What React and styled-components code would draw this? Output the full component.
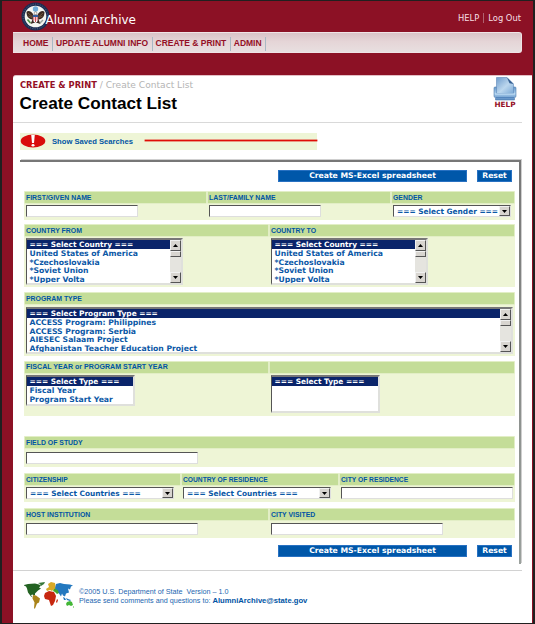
import React from "react";
import styled, { createGlobalStyle } from "styled-components";

const GlobalStyle = createGlobalStyle`
  * { box-sizing: border-box; }
  body { margin: 0; background: #1c1c1c; }
  ul { list-style: none; margin: 0; padding: 0; }
  h1, p { margin: 0; }
`;

const verdana = '"DejaVu Sans", sans-serif';
const arial = '"Liberation Sans", sans-serif';

const Page = styled.div`
  width: 535px;
  height: 624px;
  padding: 1px 2px 1px 2px;
  background: #202020;
  overflow: hidden;
  display: flex;
`;
const Shell = styled.div`
  flex: 1;
  display: flex;
  flex-direction: column;
  background: #8c1125;
  padding: 0 1px 0 11px;
  min-width: 0;
`;
const Masthead = styled.header`
  height: 31px;
  padding: 0 11px 0 8px;
  display: flex;
  align-items: center;
`;
const SealIcon = styled.svg`
  width: 29px;
  height: 29px;
  flex: none;
`;
const SiteName = styled.div`
  flex: 1;
  margin-left: -4.5px;
  padding-top: 7px;
  font: 12px/16px ${verdana};
  color: #fff;
  z-index: 1;
`;
const UserLinks = styled.nav`
  display: flex;
  gap: 4px;
  padding-top: 2px;
  font: 8.35px/10px ${verdana};
  color: #f6dfe3;
  a + a { border-left: 1px solid #b0616f; padding-left: 4px; }
`;
const MainNav = styled.nav`
  display: flex;
  width: 509px;
  height: 21px;
  padding: 5px 0 0 7px;
  border: 1px solid #efe3e5;
  border-left: 0;
  border-radius: 0 3px 3px 0;
  background: linear-gradient(#d9c3c7, #e5d5d7 45%, #e8dfe0);
`;
const NavItem = styled.a`
  height: 14px;
  margin-top: -1px;
  padding: 0 3.5px 0 3px;
  border-right: 1px solid #a9b9c4;
  font: bold 8.5px/13px ${arial};
  color: #941026;
  white-space: nowrap;
`;
const Panel = styled.main`
  flex: 1;
  margin-top: 22px;
  background: #fff;
  border-radius: 3px 0 0 0;
  border-top: 1px solid #e3bfc5;
  display: flex;
  flex-direction: column;
`;
const TitleBar = styled.div`
  width: 509px;
  height: 47px;
  padding: 3px 4px 0 7px;
  border-bottom: 1px solid #d9d9d9;
  display: flex;
  justify-content: space-between;
`;
const Crumbs = styled.div`
  font: 9.1px/12px ${verdana};
  color: #b4b4b4;
  white-space: pre;
  b { font-size: 8.35px; color: #941026; }
`;
const Title = styled.h1`
  font: bold 17.2px/20px ${arial};
  color: #000;
  margin-top: 2px;
  margin-left: -0.5px;
`;
const HelpLink = styled.a`
  width: 26px;
  display: flex;
  flex-direction: column;
  align-items: center;
  margin-top: -3px;
  font: bold 7.3px/8px ${verdana};
  color: #941026;
  svg { width: 24px; height: 25px; }
`;
const SavedSearches = styled.div`
  width: 297px;
  height: 17px;
  margin: 10px 0 10px 7px;
  background: #eef5d6;
  display: flex;
  align-items: center;
  font: bold 7.63px/12px ${arial};
  color: #0054a4;
  svg { width: 26px; height: 14px; margin-right: 6px; margin-top: -1px; }
  &::after { content: ""; width: 172px; height: 1px; margin: -2px 0 0 12px; background: #e00d06; box-shadow: 0 0 0 .4px #e00d06; }
`;
const SearchForm = styled.form`
  width: 501px;
  height: 404px;
  margin-left: 7px;
  padding: 8px 5px 0 4px;
  border: solid;
  border-width: 2px 2px 0 0;
  border-image: linear-gradient(#777, #9ba19d) 1;
  box-shadow: 1px -1px 0 #cfcfcf;
`;
const Actions = styled.div`
  display: flex;
  justify-content: flex-end;
  gap: 10px;
  margin-top: ${(p) => p.$gap || 0}px;
  padding-right: 2px;
  height: 12px;
`;
const ActionButton = styled.button`
  width: ${(p) => p.$width}px;
  height: 12px;
  padding: 0;
  border: 1px solid #2871c2;
  background: #0057a9;
  color: #fff;
  font: bold 7.68px/10px ${verdana};
`;
const Group = styled.section`
  display: grid;
  grid-template-columns: ${(p) => p.$columns || "1fr"};
  column-gap: 2px;
  width: 491px;
  height: ${(p) => p.$height}px;
  margin-top: ${(p) => p.$gap}px;
  padding: 1px 1px 0;
  background: #eef5d6;
`;
const Field = styled.div`
  display: flex;
  flex-direction: column;
  align-items: flex-start;
  min-width: 0;
`;
const Label = styled.label`
  width: 100%;
  height: 11px;
  padding-left: 1px;
  background: #c4dd98;
  box-shadow: 0 0 0 .5px #d6e8b6;
  font: bold ${(p) => p.$size || 6.9}px/11px ${arial};
  color: #0054a4;
  white-space: nowrap;
`;
const TextInput = styled.input`
  width: ${(p) => p.$width}px;
  height: 12px;
  margin: ${(p) => p.$top || 2}px 0 0 1px;
  padding: 0 2px;
  border: 1px solid;
  border-color: #555 #dedede #dedede #555;
  background: #fff;
  border-radius: 0;
`;
const Combo = styled.div`
  width: ${(p) => p.$width}px;
  height: 12px;
  margin: 2px 0 0 1px;
  padding-left: 3px;
  display: flex;
  justify-content: space-between;
  border: 1px solid;
  border-color: #555 #dedede #dedede #555;
  background: #fff;
  color: #0b58a6;
  font: bold 7.4px/11px ${verdana};
  white-space: nowrap;
`;
const ArrowButton = styled.span`
  width: 11px;
  height: ${(p) => p.$height || 10}px;
  flex: none;
  display: flex;
  align-items: center;
  justify-content: center;
  border: 1px solid;
  border-color: #f1f1f1 #555 #555 #f1f1f1;
  background: #d8d5d0;
  svg { width: 5px; height: 3px; fill: #000; transform: ${(p) => (p.$up ? "scaleY(-1)" : "none")}; }
`;
const ListFrame = styled.div`
  width: ${(p) => p.$width}px;
  height: ${(p) => p.$height}px;
  margin: ${(p) => p.$top || 2}px 0 0 1px;
  display: flex;
  border: 1px solid;
  border-color: #777 #dfe0dc #dfe0dc #555;
  border-width: 2px 2px 2px 1px;
  background: #fff;
  overflow: hidden;
`;
const Options = styled.ul`
  flex: 1;
  min-width: 0;
`;
const Option = styled.li`
  height: ${(p) => (p.$selected ? 9.2 : 8.63)}px;
  padding-left: 2.5px;
  background: ${(p) => (p.$selected ? "#0a246a" : "transparent")};
  color: ${(p) => (p.$selected ? "#fff" : "#0b58a6")};
  font: bold ${(p) => (p.$selected ? 7.4 : 7.68)}px/9.4px ${verdana};
  white-space: nowrap;
`;
const Scrollbar = styled.div`
  width: 11px;
  display: flex;
  flex-direction: column;
  justify-content: space-between;
  background: #e5e4df;
`;
const Thumb = styled.span`
  height: 6px;
  margin-bottom: auto;
  border: 1px solid;
  border-color: #f1f1f1 #555 #555 #f1f1f1;
  background: #d8d5d0;
`;
const Footer = styled.footer`
  width: 509px;
  margin-top: 6px;
  padding: 11px 0 0 10px;
  border-top: 1px solid #d2d2d2;
  display: flex;
  font: 7.2px/9px ${arial};
  color: #1c66b0;
  white-space: pre;
  svg { width: 51px; height: 28px; margin-right: 5px; }
  p { padding-top: 5px; }
  a { font-weight: bold; font-size: 7.65px; color: #0054a4; }
`;

const Seal = () => (
  <SealIcon viewBox="0 0 29 29">
    <circle cx="14.5" cy="14.5" r="14" fill="#1c2d52" />
    <circle cx="14.5" cy="14.5" r="12.4" fill="none" stroke="#64718a" strokeWidth=".8" strokeDasharray="1 1.4" />
    <circle cx="14.5" cy="14.5" r="10.8" fill="#f5f6f1" />
    <circle cx="14.5" cy="7" r="2.7" fill="#6facd8" />
    <path d="M12.500 13C11 9.500 7 8 5.500 10c0 4.500 2 7 6 7.500l-2 4.500 3-1h4l3 1-2-4.500c4-.5 6-3 6-7.500-1.500-2-5.500-.5-7 3z" fill="#3b2922" />
    <path d="M7 11l4 3.500M22 11l-4 3.500M7.500 14l3.500 1.500M21.500 14L18 15.500" stroke="#94774b" strokeWidth=".6" />
    <path d="M11.900 13h5.200v4.500q-.4 2.500-2.600 3.500-2.200-1-2.600-3.500z" fill="#fff" />
    <path d="M11.900 13h5.200v2h-5.200z" fill="#315c9c" />
    <path d="M12.800 15v3.500M14.500 15v5M16.200 15v3.500" stroke="#c8202d" strokeWidth=".8" />
    <path d="M6.500 17.500l3 3.500" stroke="#4c9342" strokeWidth="1.700" />
    <path d="M22 18l-3 3" stroke="#99a5a0" strokeWidth="1.400" />
    <path d="M13.200 12.500q-.4-2.700 1.500-2.700 1.600 0 1.200 2.700z" fill="#fff" stroke="#3b2922" strokeWidth=".4" />
  </SealIcon>
);
const PrinterIcon = () => (
  <svg viewBox="0 0 24 25">
    <defs>
      <linearGradient id="paper" x1="0" y1="0" x2="1" y2="1">
        <stop offset="0" stopColor="#6f9ccc" />
        <stop offset=".55" stopColor="#bcd7ee" />
        <stop offset="1" stopColor="#7ba9d6" />
      </linearGradient>
      <linearGradient id="tray" x1="0" y1="0" x2="0" y2="1">
        <stop offset="0" stopColor="#6698ca" />
        <stop offset=".5" stopColor="#a9cdec" />
        <stop offset="1" stopColor="#5688c0" />
      </linearGradient>
    </defs>
    <path d="M1 12q0-1 1-1h20q1 0 1 1v8q0 1.500-1.500 1.500V24h-19v-2.500Q1 21.500 1 20z" fill="url(#tray)" stroke="#547fae" strokeWidth=".6" />
    <path d="M3.500 1.500H14L20.500 8v9.500h-17z" fill="url(#paper)" stroke="#5c87b8" strokeWidth=".6" />
    <path d="M14 1.500L20.500 8l-4-.8z" fill="#345e91" />
    <path d="M2 18h20" stroke="#c4e0f6" strokeWidth="1" />
    <path d="M3 21.500h18" stroke="#4b7db7" strokeWidth=".8" />
  </svg>
);
const AlertIcon = () => (
  <svg viewBox="0 0 26 14">
    <ellipse cx="13" cy="7" rx="12.300" ry="6.500" fill="#d90d0b" />
    <path d="M11.200.8h3.600L14 9h-2z" fill="#fff" />
    <ellipse cx="13" cy="11.300" rx="1.500" ry="1.300" fill="#fff" />
  </svg>
);
const WorldMap = () => (
  <svg viewBox="0 0 51 28">
    <path d="M1 3l4-1 7-.5 4 1 2 1-2 2 2 1-3 2-2 2-1 1v2l-3-1-1 1 2 2-2-1-3-4-1-4-1-2-2-1z" fill="#236222" />
    <path d="M15 1l7-1-1 2-3 2-1-2z" fill="#38783a" />
    <path d="M10 13l3 .5 4 3-1 4-2 1-2 5h-1l.5-6-2-4z" fill="#a98318" />
    <path d="M25 2l3-2 4 1 1 6-3 1-1 1-2-1-3 1-1-2 3-2z" fill="#d8a928" />
    <path d="M22 11l4-2 5 1 2 4-1 5-2 4-2 1-2-6-4-1-1-3z" fill="#c7270f" />
    <path d="M34 17l1 1-1 3-1-1z" fill="#c7270f" />
    <path d="M31 7l3-1 4 2-2 3-2 1-2-2-2-1z" fill="#42a62b" />
    <path d="M33 2l4-1 4 1 6 .5 3 1-2 1-1 3-2-1 1 4-3 1-1 3-2-1-1-2-1 3-2-3-1-3-3-2z" fill="#2378bf" />
    <path d="M40 15l2 1 1 2h-2zM43 16l2 1 3 1-1 1-3-1z" fill="#2378bf" />
    <path d="M44 20l3-1 2 1 1 3-2 1-2-1-2 1-1-2zM50 24l1 1-1 1z" fill="#43b736" />
  </svg>
);
const Arrow = () => <svg viewBox="0 0 5 3"><path d="M0 0h5L2.500 3z" /></svg>;

const ListBox = ({ options, scroll, ...frame }) => (
  <ListFrame {...frame}>
    <Options>
      {options.map((o, i) => <Option key={o} $selected={i === 0}>{o}</Option>)}
    </Options>
    {scroll && (
      <Scrollbar>
        <ArrowButton $up $height={11}><Arrow /></ArrowButton>
        <Thumb />
        <ArrowButton $height={11}><Arrow /></ArrowButton>
      </Scrollbar>
    )}
  </ListFrame>
);
const Dropdown = ({ text, width }) => (
  <Combo $width={width}>{text}<ArrowButton><Arrow /></ArrowButton></Combo>
);
const FormActions = ({ gap }) => (
  <Actions $gap={gap}>
    <ActionButton type="button" $width={189}>Create MS-Excel spreadsheet</ActionButton>
    <ActionButton type="button" $width={35}>Reset</ActionButton>
  </Actions>
);

const countries = ["=== Select Country ===", "United States of America", "*Czechoslovakia", "*Soviet Union", "*Upper Volta"];
const programs = ["=== Select Program Type ===", "ACCESS Program: Philippines", "ACCESS Program: Serbia", "AIESEC Salaam Project", "Afghanistan Teacher Education Project"];

export default function App() {
  return (
    <Page>
      <GlobalStyle />
      <Shell>
        <Masthead>
          <Seal />
          <SiteName>Alumni Archive</SiteName>
          <UserLinks><a>HELP</a><a>Log Out</a></UserLinks>
        </Masthead>
        <MainNav>
          <NavItem>HOME</NavItem>
          <NavItem>UPDATE ALUMNI INFO</NavItem>
          <NavItem>CREATE &amp; PRINT</NavItem>
          <NavItem>ADMIN</NavItem>
        </MainNav>
        <Panel>
          <TitleBar>
            <div>
              <Crumbs><b>CREATE &amp; PRINT</b> / Create Contact List</Crumbs>
              <Title>Create Contact List</Title>
            </div>
            <HelpLink><PrinterIcon />HELP</HelpLink>
          </TitleBar>
          <SavedSearches><AlertIcon />Show Saved Searches</SavedSearches>
          <SearchForm>
            <FormActions />
            <Group $columns="181px 182px 1fr" $height={29} $gap={9}>
              <Field><Label>FIRST/GIVEN NAME</Label><TextInput $width={112} /></Field>
              <Field><Label>LAST/FAMILY NAME</Label><TextInput $width={112} /></Field>
              <Field><Label>GENDER</Label><Dropdown text="=== Select Gender ===" width={118} /></Field>
            </Group>
            <Group $columns="243px 1fr" $height={63} $gap={4}>
              <Field><Label>COUNTRY FROM</Label><ListBox options={countries} scroll $width={157} $height={47} /></Field>
              <Field><Label>COUNTRY TO</Label><ListBox options={countries} scroll $width={157} $height={47} /></Field>
            </Group>
            <Group $height={64} $gap={5}>
              <Field><Label>PROGRAM TYPE</Label><ListBox options={programs} scroll $width={487} $height={47} $top={3} /></Field>
            </Group>
            <Group $columns="243px 1fr" $height={55} $gap={5}>
              <Field>
                <Label $size={7.1}>FISCAL YEAR or PROGRAM START YEAR</Label>
                <ListBox options={["=== Select Type ===", "Fiscal Year", "Program Start Year"]} $width={109} $height={31} />
              </Field>
              <Field><Label /><ListBox options={["=== Select Type ==="]} $width={109} $height={38} /></Field>
            </Group>
            <Group $height={31} $gap={20}>
              <Field><Label>FIELD OF STUDY</Label><TextInput $width={172} $top={4} /></Field>
            </Group>
            <Group $columns="155px 156px 1fr" $height={29} $gap={6}>
              <Field><Label $size={6.7}>CITIZENSHIP</Label><Dropdown text="=== Select Countries ===" width={148} /></Field>
              <Field><Label $size={6.7}>COUNTRY OF RESIDENCE</Label><Dropdown text="=== Select Countries ===" width={148} /></Field>
              <Field><Label $size={6.7}>CITY OF RESIDENCE</Label><TextInput $width={172} /></Field>
            </Group>
            <Group $columns="243px 1fr" $height={30} $gap={6}>
              <Field><Label>HOST INSTITUTION</Label><TextInput $width={172} $top={3} /></Field>
              <Field><Label>CITY VISITED</Label><TextInput $width={172} $top={3} /></Field>
            </Group>
            <FormActions gap={7} />
          </SearchForm>
          <Footer>
            <WorldMap />
            <p>
              ©2005 U.S. Department of State  Version – 1.0{"\n"}
              Please send comments and questions to: <a>AlumniArchive@state.gov</a>
            </p>
          </Footer>
        </Panel>
      </Shell>
    </Page>
  );
}
